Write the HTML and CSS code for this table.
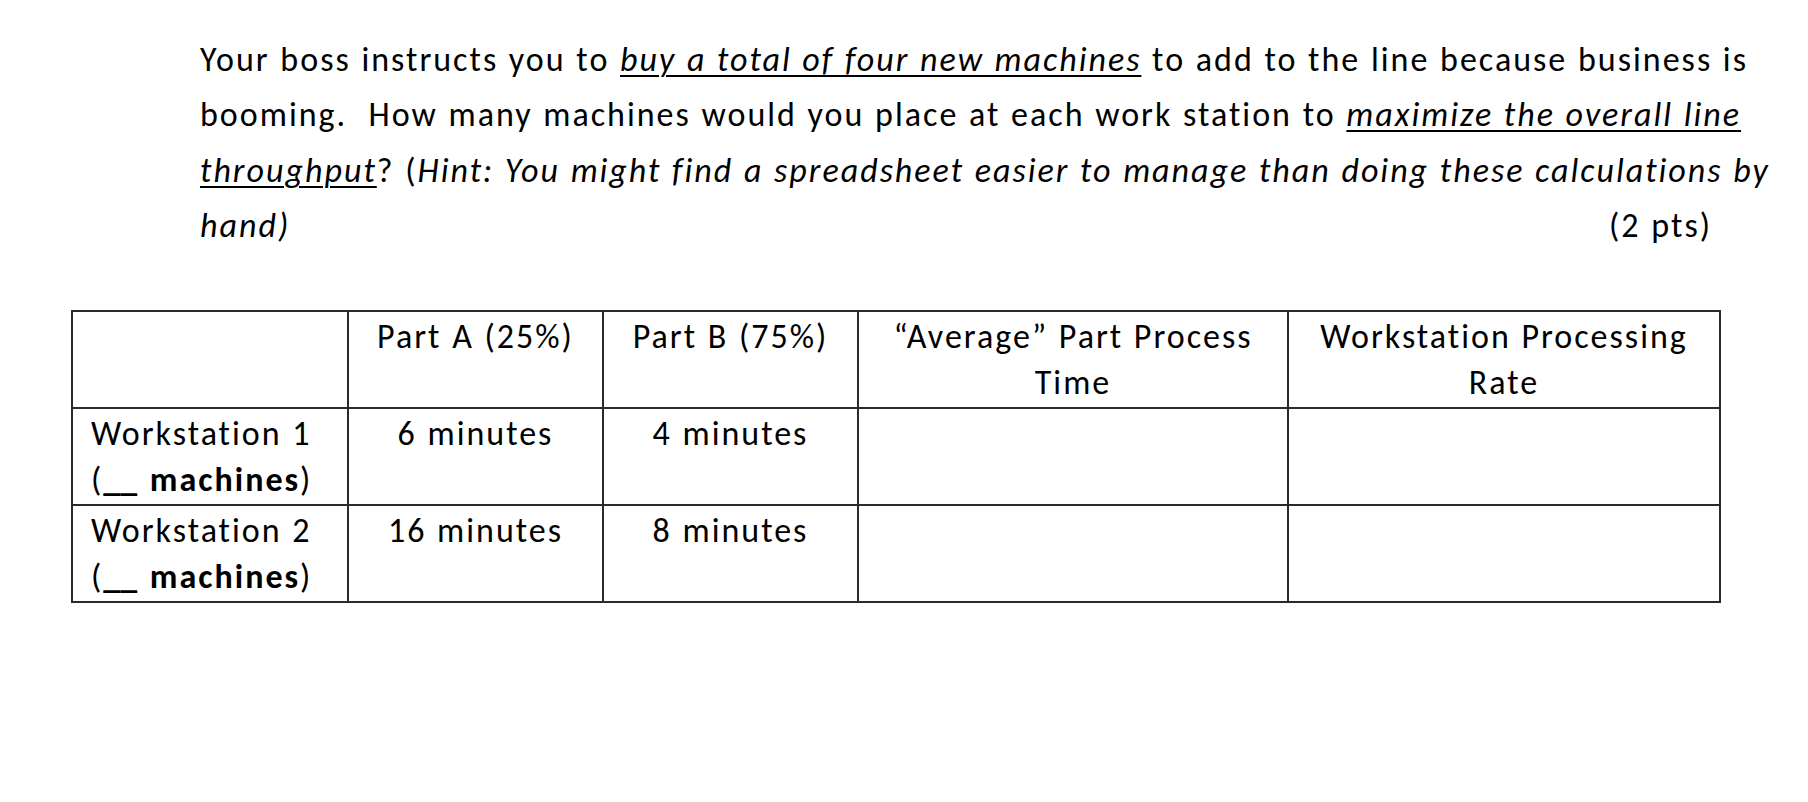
FILE: index.html
```html
<!DOCTYPE html>
<html lang="en">
<head>
<meta charset="utf-8">
<title>Workstation question</title>
<link rel="stylesheet" href="styles.css">
</head>
<body>
<main class="page">
  <p class="question">
    <span class="line">Your boss instructs you to <em class="u">buy a total of four new machines</em> to add to the line because business is</span>
    <span class="line">booming.&nbsp; How many machines would you place at each work station to <em class="u">maximize the overall line</em></span>
    <span class="line"><em class="u">throughput</em>? (<em>Hint: You might find a spreadsheet easier to manage than doing these calculations by</em></span>
    <span class="line last"><em>hand)</em><span class="pts">(2 pts)</span></span>
  </p>
  <table class="grid">
    <colgroup>
      <col class="c1"><col class="c2"><col class="c3"><col class="c4"><col class="c5">
    </colgroup>
    <tr>
      <td></td>
      <td class="ctr">Part A (25%)</td>
      <td class="ctr">Part B (75%)</td>
      <td class="ctr">“Average” Part Process Time</td>
      <td class="ctr">Workstation Processing Rate</td>
    </tr>
    <tr>
      <td class="lbl">Workstation 1<br>(<b><span class="blank">__</span> machines</b>)</td>
      <td class="ctr">6 minutes</td>
      <td class="ctr">4 minutes</td>
      <td></td>
      <td></td>
    </tr>
    <tr>
      <td class="lbl">Workstation 2<br>(<b><span class="blank">__</span> machines</b>)</td>
      <td class="ctr">16 minutes</td>
      <td class="ctr">8 minutes</td>
      <td></td>
      <td></td>
    </tr>
  </table>
</main>
</body>
</html>
```
FILE: styles.css
```css
html, body {
  margin: 0;
  padding: 0;
  background: #fff;
}
body {
  font-family: Carlito, Lato, "Liberation Sans", sans-serif;
  color: #000;
  font-size: 34px;
  letter-spacing: 2px;
  word-spacing: 1px;
}
.page {
  padding-top: 32px;
}
.question {
  margin: 0 0 56px 0;
  padding-left: 200px;
  width: 1520px;
  line-height: 55.4px;
}
.line {
  display: block;
  white-space: nowrap;
}
.line.last {
  display: flex;
  justify-content: space-between;
}
.pts {
  margin-right: 8px;
}
.u {
  text-decoration: underline;
  text-decoration-thickness: 2px;
  text-underline-offset: 4px;
}
em {
  font-style: italic;
}
.grid {
  margin-left: 71px;
  border-collapse: collapse;
  table-layout: fixed;
  width: 1650px;
}
.grid td {
  border: 2px solid #2b2b2b;
  height: 93px;
  padding: 2px 18px 0 18px;
  vertical-align: top;
  line-height: 46px;
}
.c1 { width: 276px; }
.c2 { width: 255px; }
.c3 { width: 255px; }
.c4 { width: 430px; }
.c5 { width: 432px; }
.ctr { text-align: center; }
.lbl { text-align: left; }
.lbl b { font-weight: 700; }
.blank {
  letter-spacing: 0;
  margin-right: 2px;
}
```
